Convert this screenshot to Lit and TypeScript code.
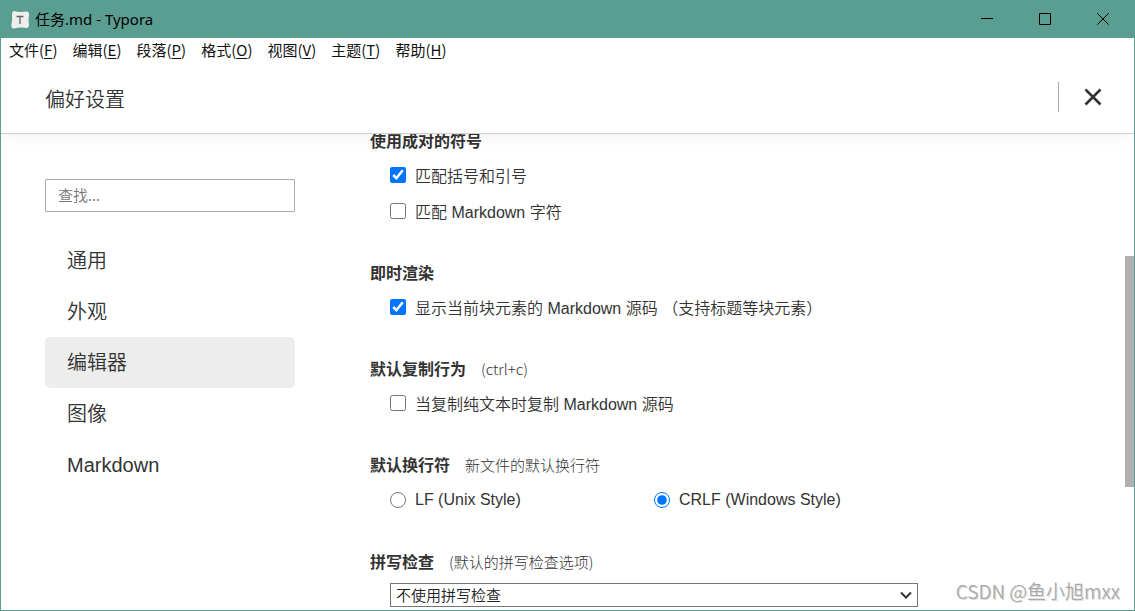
import { LitElement, html, css, svg, nothing } from "lit";
import { customElement, state } from "lit/decorators.js";

const MENUS = [
  ["文件", "F"],
  ["编辑", "E"],
  ["段落", "P"],
  ["格式", "O"],
  ["视图", "V"],
  ["主题", "T"],
  ["帮助", "H"],
];

const PAGES = ["通用", "外观", "编辑器", "图像", "Markdown"];

@customElement("title-bar")
class TitleBar extends LitElement {
  static styles = css`
    :host {
      display: flex;
      align-items: center;
      height: 37px;
      padding: 0 2px 0 9px;
      background: #5a9e92;
      color: #000;
      font: 15px "Noto Sans", "Noto Sans CJK SC", sans-serif;
    }
    .logo {
      width: 20px;
      height: 20px;
    }
    .title {
      flex: 1;
      margin-left: 5px;
      line-height: 20px;
      padding-bottom: 2px;
    }
    .control {
      display: grid;
      place-items: center;
      width: 58px;
      height: 36px;
      padding: 0 0 2px;
      border: 0;
      background: none;
      color: inherit;
    }
    .glyph {
      width: 12px;
      height: 12px;
      fill: none;
      stroke: currentColor;
    }
  `;

  private control(label: string, shape: unknown) {
    return html`<button class="control" aria-label=${label}>
      <svg class="glyph" viewBox="0 0 12 12">${shape}</svg>
    </button>`;
  }

  render() {
    return html`
      <svg class="logo" viewBox="0 0 20 20">
        <path
          d="M4 1Q9 2.500 17 1.500Q19.500 2 19 5Q18 10 19 15Q19 17.500 17 18Q10 17 4 18.500Q1.500 18.500 1.300 16Q2.500 10 2 4Q2 1.500 4 1Z"
          fill="#eeeeee"
        />
        <path d="M6.500 6.500H13.500M10 6.500V14" fill="none" stroke="#666" stroke-width="1.300" />
      </svg>
      <span class="title">任务.md - Typora</span>
      ${this.control("最小化", svg`<path d="M0 5.500H12" />`)}
      ${this.control("最大化", svg`<path d="M.5 .5H11.500V11.500H.5Z" />`)}
      ${this.control("关闭窗口", svg`<path d="M.3 .3L11.700 11.700M11.700 .3L.3 11.700" />`)}
    `;
  }
}

@customElement("menu-bar")
class MenuBar extends LitElement {
  static styles = css`
    :host {
      display: flex;
      align-items: flex-start;
      gap: 15px;
      height: 28px;
      padding-left: 8px;
      font: 15px "Noto Sans CJK SC", sans-serif;
    }
    .item {
      padding: 0;
      border: 0;
      background: none;
      color: #111;
      font: inherit;
      line-height: 24px;
    }
    .key {
      text-decoration: underline;
      text-underline-offset: 2px;
    }
  `;

  render() {
    return MENUS.map(
      ([name, key]) => html`<button class="item">${name}(<span class="key">${key}</span>)</button>`
    );
  }
}

@customElement("pref-section")
class PrefSection extends LitElement {
  static properties = { heading: {}, note: {} };
  declare heading: string;
  declare note?: string;

  static styles = css`
    :host {
      display: block;
      margin-bottom: 26px;
    }
    .head {
      display: flex;
      align-items: center;
      gap: 15px;
      height: 34px;
    }
    .heading {
      margin: 0;
      font-size: 16px;
      font-weight: 700;
    }
    .note {
      font-size: 15px;
      font-weight: 300;
      font-family: "Noto Sans CJK SC", sans-serif;
    }
    .body {
      padding-left: 20px;
    }
  `;

  render() {
    return html`
      <div class="head">
        <h2 class="heading">${this.heading}</h2>
        ${this.note ? html`<span class="note">${this.note}</span>` : nothing}
      </div>
      <div class="body"><slot></slot></div>
    `;
  }
}

@customElement("app-root")
class AppRoot extends LitElement {
  @state() private page = "编辑器";

  static styles = css`
    :host {
      display: flex;
      flex-direction: column;
      position: relative;
      box-sizing: border-box;
      height: 100vh;
      overflow: hidden;
      border: 1px solid #5a9e92;
      background: #fff;
      color: #333;
      font: 16px "Liberation Sans", "Noto Sans CJK SC", sans-serif;
    }
    .header {
      display: flex;
      align-items: center;
      height: 67px;
      padding: 0 20px 0 44px;
      border-bottom: 1px solid #d0d0d0;
      box-shadow: 0 8px 12px -4px rgba(0, 0, 0, 0.05);
      z-index: 1;
    }
    .caption {
      flex: 1;
      margin: 0;
      padding-bottom: 2px;
      font-size: 20px;
      font-weight: 350;
    }
    .close {
      display: grid;
      place-items: center end;
      width: 56px;
      height: 30px;
      margin-bottom: 6px;
      padding: 0 12px 0 0;
      border: 0;
      border-left: 1px solid #aaa;
      background: none;
      color: #333;
    }
    .cross {
      width: 18px;
      height: 18px;
      fill: none;
      stroke: currentColor;
      stroke-width: 2.600;
    }
    .main {
      display: flex;
      flex: 1;
      min-height: 0;
    }
    .side {
      width: 250px;
      padding: 45px 0 0 44px;
    }
    .search {
      box-sizing: border-box;
      width: 100%;
      height: 33px;
      padding: 0 12px 2px;
      border: 1px solid #aaa;
      border-radius: 1px;
      font: 350 15px "Noto Sans CJK SC", sans-serif;
    }
    .search::placeholder {
      color: #777;
    }
    .nav {
      display: flex;
      flex-direction: column;
      margin-top: 23px;
    }
    .link {
      height: 51px;
      padding: 0 22px;
      border-radius: 5px;
      color: #333;
      font-size: 20px;
      font-weight: 350;
      line-height: 52px;
      text-decoration: none;
    }
    .link.active {
      background: #ededed;
    }
    .content {
      flex: 1;
      padding-left: 75px;
      overflow: hidden;
    }
    .scrolled {
      margin-top: -11px;
    }
    .options {
      display: grid;
      grid-template-columns: repeat(2, 264px);
      padding-top: 1px;
    }
    .option {
      display: flex;
      align-items: center;
      gap: 9px;
      height: 36px;
      font-weight: 350;
      white-space: pre;
    }
    .box {
      width: 16px;
      height: 16px;
      margin: 0;
      accent-color: #0075ff;
    }
    .picker {
      display: grid;
      align-items: center;
      max-width: 528px;
      margin-top: 5px;
    }
    .select {
      grid-area: 1 / 1;
      appearance: none;
      height: 24px;
      padding: 0 5px 2px;
      border: 1px solid #767676;
      border-radius: 0;
      background: #fff;
      color: #222;
      font: 350 15px "Noto Sans CJK SC", sans-serif;
    }
    .chevron {
      grid-area: 1 / 1;
      justify-self: end;
      width: 12px;
      height: 8px;
      margin-right: 6px;
      fill: none;
      stroke: #333;
      stroke-width: 2;
      pointer-events: none;
    }
    .track {
      display: flex;
      flex-direction: column;
      width: 9px;
    }
    .before {
      flex: 122;
    }
    .thumb {
      flex: 231;
      background: #b0b0b0;
    }
    .after {
      flex: 123;
    }
    .watermark {
      position: absolute;
      right: 14px;
      bottom: 6px;
      color: #aaa;
      font: 350 19px "Noto Sans CJK SC", sans-serif;
      text-shadow: 1px 1px 0 #ddd;
    }
  `;

  private option(label: string, checked: boolean, group?: string) {
    return html`<label class="option"
      ><input class="box" type=${group ? "radio" : "checkbox"} name=${group ?? "option"} .checked=${checked} />${label}</label
    >`;
  }

  render() {
    return html`
      <title-bar></title-bar>
      <menu-bar></menu-bar>
      <header class="header">
        <h1 class="caption">偏好设置</h1>
        <button class="close" aria-label="关闭">
          <svg class="cross" viewBox="0 0 18 18"><path d="M1.500 1.500L16.500 16.500M16.500 1.500L1.500 16.500" /></svg>
        </button>
      </header>
      <div class="main">
        <aside class="side">
          <input class="search" type="text" placeholder="查找..." aria-label="查找" />
          <nav class="nav">
            ${PAGES.map(
              (name) => html`<a
                class="link ${name === this.page ? "active" : ""}"
                href="#"
                @click=${(e: Event) => {
                  e.preventDefault();
                  this.page = name;
                }}
                >${name}</a
              >`
            )}
          </nav>
        </aside>
        <main class="content">
          <div class="scrolled">
            <pref-section heading="使用成对的符号">
              ${this.option("匹配括号和引号", true)} ${this.option("匹配 Markdown 字符", false)}
            </pref-section>
            <pref-section heading="即时渲染">
              ${this.option("显示当前块元素的 Markdown 源码 （支持标题等块元素）", true)}
            </pref-section>
            <pref-section heading="默认复制行为" note="(ctrl+c)">
              ${this.option("当复制纯文本时复制 Markdown 源码", false)}
            </pref-section>
            <pref-section heading="默认换行符" note="新文件的默认换行符">
              <div class="options">
                ${this.option("LF (Unix Style)", false, "newline")}
                ${this.option("CRLF (Windows Style)", true, "newline")}
              </div>
            </pref-section>
            <pref-section heading="拼写检查" note="(默认的拼写检查选项)">
              <div class="picker">
                <select class="select" aria-label="拼写检查">
                  <option>不使用拼写检查</option>
                </select>
                <svg class="chevron" viewBox="0 0 12 8"><path d="M1 1.500L6 6.500L11 1.500" /></svg>
              </div>
            </pref-section>
          </div>
        </main>
        <div class="track">
          <div class="before"></div>
          <div class="thumb"></div>
          <div class="after"></div>
        </div>
      </div>
      <div class="watermark">CSDN @鱼小旭mxx</div>
    `;
  }
}
